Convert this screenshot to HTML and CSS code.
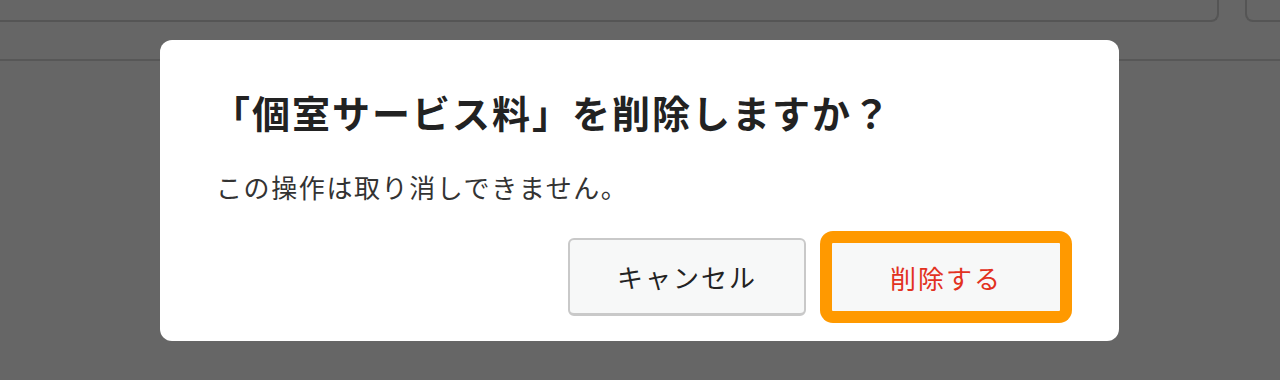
FILE: index.html
```html
<!DOCTYPE html>
<html lang="ja">
<head>
<meta charset="utf-8">
<title>削除の確認</title>
<link rel="stylesheet" href="styles.css">
</head>
<body>
<div class="page">
  <div class="top-row">
    <div class="field field-main"></div>
    <div class="field field-side"></div>
  </div>
  <div class="rule"></div>
</div>
<div class="modal" role="dialog" aria-modal="true">
  <h2 class="modal-title">「個室サービス料」を削除しますか？</h2>
  <p class="modal-text">この操作は取り消しできません。</p>
  <div class="modal-actions">
    <button class="btn btn-cancel" type="button">キャンセル</button>
    <button class="btn btn-delete" type="button">削除する</button>
  </div>
</div>
</body>
</html>
```
FILE: styles.css
```css
html, body {
  margin: 0;
  padding: 0;
}
body {
  width: 1280px;
  height: 380px;
  overflow: hidden;
  background: #666666;
  font-family: "Noto Sans CJK JP", "Noto Sans", sans-serif;
  position: relative;
}
.page {
  display: flex;
  flex-direction: column;
}
.top-row {
  display: flex;
  gap: 26px;
  margin-left: -10px;
  margin-right: -20px;
  height: 22px;
}
.field {
  box-sizing: border-box;
  height: 22px;
  border: 2px solid #555555;
  border-top: none;
  border-radius: 0 0 8px 8px;
}
.field-main {
  width: 1229px;
}
.field-side {
  flex: 1;
}
.rule {
  margin-top: 37px;
  height: 2px;
  background: #575757;
}
.modal {
  position: absolute;
  left: 160px;
  top: 40px;
  width: 959px;
  height: 301px;
  box-sizing: border-box;
  background: #ffffff;
  border-radius: 12px;
  padding: 45px 54px 25px 56px;
  display: flex;
  flex-direction: column;
}
.modal-title {
  margin: 0 0 0 -4px;
  font-size: 38px;
  line-height: 53px;
  font-weight: 700;
  letter-spacing: 2px;
  color: #222222;
}
.modal-text {
  margin: 29px 0 0 0;
  font-size: 26px;
  line-height: 39px;
  letter-spacing: 1.6px;
  color: #333333;
}
.modal-actions {
  margin-top: auto;
  display: flex;
  justify-content: flex-end;
  gap: 21px;
}
.btn {
  box-sizing: border-box;
  width: 238px;
  height: 78px;
  border-radius: 6px;
  background: #f7f8f8;
  font-family: inherit;
  font-size: 26px;
  letter-spacing: 2px;
  padding: 0;
  cursor: pointer;
}
.btn-cancel {
  border: 2px solid #c9c9c9;
  border-bottom-width: 3px;
  color: #222222;
}
.btn-delete {
  border: 5px solid #ff9900;
  box-shadow: 0 0 0 7px #ff9900;
  border-radius: 6px;
  color: #e2321f;
}
```
